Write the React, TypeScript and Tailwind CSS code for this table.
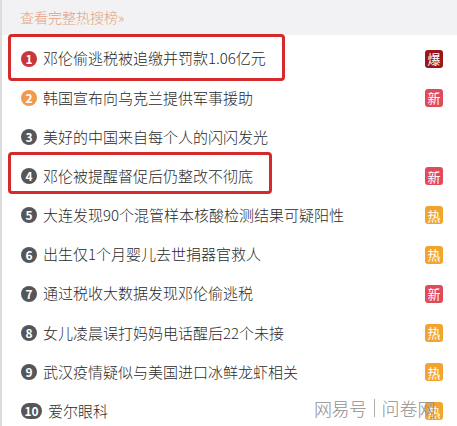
import clsx from "clsx";

type Item = {
  title: string;
  tag?: "爆" | "新" | "热";
};

const items: Item[] = [
  { title: "邓伦偷逃税被追缴并罚款1.06亿元", tag: "爆" },
  { title: "韩国宣布向乌克兰提供军事援助", tag: "新" },
  { title: "美好的中国来自每个人的闪闪发光" },
  { title: "邓伦被提醒督促后仍整改不彻底", tag: "新" },
  { title: "大连发现90个混管样本核酸检测结果可疑阳性", tag: "热" },
  { title: "出生仅1个月婴儿去世捐器官救人", tag: "热" },
  { title: "通过税收大数据发现邓伦偷逃税", tag: "新" },
  { title: "女儿凌晨误打妈妈电话醒后22个未接", tag: "热" },
  { title: "武汉疫情疑似与美国进口冰鲜龙虾相关", tag: "热" },
  { title: "爱尔眼科", tag: "热" },
];

const font = {
  fontFamily: '"Noto Sans CJK SC", "Noto Sans", sans-serif',
};

function RankDot({ n }: { n: number }) {
  return (
    <span
      className={clsx(
        "flex h-[16px] shrink-0 items-center justify-center rounded-full text-[12px] font-bold leading-none text-white",
        n >= 10 ? "w-[21px]" : "w-[16px]",
        n === 1 && "bg-[#c8363a]",
        n === 2 && "bg-[#f09a4c]",
        n > 2 && "bg-[#55565a]"
      )}
    >
      {n}
    </span>
  );
}

function Tag({ tag }: { tag: Item["tag"] }) {
  if (!tag) return null;
  return (
    <span
      className={clsx(
        "flex h-[18px] w-[18px] items-center justify-center rounded-[3px] text-[13px] leading-none text-white",
        tag === "爆" && "bg-[#9c1518]",
        tag === "新" && "bg-[#e04b5c]",
        tag === "热" && "bg-[#f2a52e]"
      )}
    >
      {tag}
    </span>
  );
}

export default function App() {
  return (
    <div
      className="relative h-[426px] w-[457px] overflow-hidden border-l-2 border-[#dcdcdc] bg-white"
      style={font}
    >
      <div className="flex h-[35px] items-center bg-[#f2f2f4] pl-[18px] text-[14px] font-light text-[#e3a07c]">
        查看完整热搜榜»
      </div>

      <div className="flex flex-col pt-[4px]">
        {items.map((item, i) => (
          <div
            key={i}
            className="flex h-[39.2px] items-center pl-[19px] pr-[14px]"
          >
            <RankDot n={i + 1} />
            <span className="ml-[6px] flex-1 text-[15px] font-light text-[#2a2a2a]">
              {item.title}
            </span>
            <Tag tag={item.tag} />
          </div>
        ))}
      </div>

      {/* red highlight boxes */}
      <div className="absolute left-[6px] top-[34px] h-[47px] w-[277px] rounded-[4px] border-[3px] border-[#d42a2a]" />
      <div className="absolute left-[6px] top-[152px] h-[42px] w-[264px] rounded-[4px] border-[3px] border-[#d42a2a]" />

      {/* watermark */}
      <div className="absolute left-[312px] top-[399px] flex items-center gap-[7px] text-[18px] font-light leading-none text-[#8f8f8f]">
        <span className="tracking-[-0.5px]">网易号</span>
        <span className="h-[18px] w-px bg-[#b0b0b0]" />
        <span>问卷网</span>
      </div>
    </div>
  );
}
